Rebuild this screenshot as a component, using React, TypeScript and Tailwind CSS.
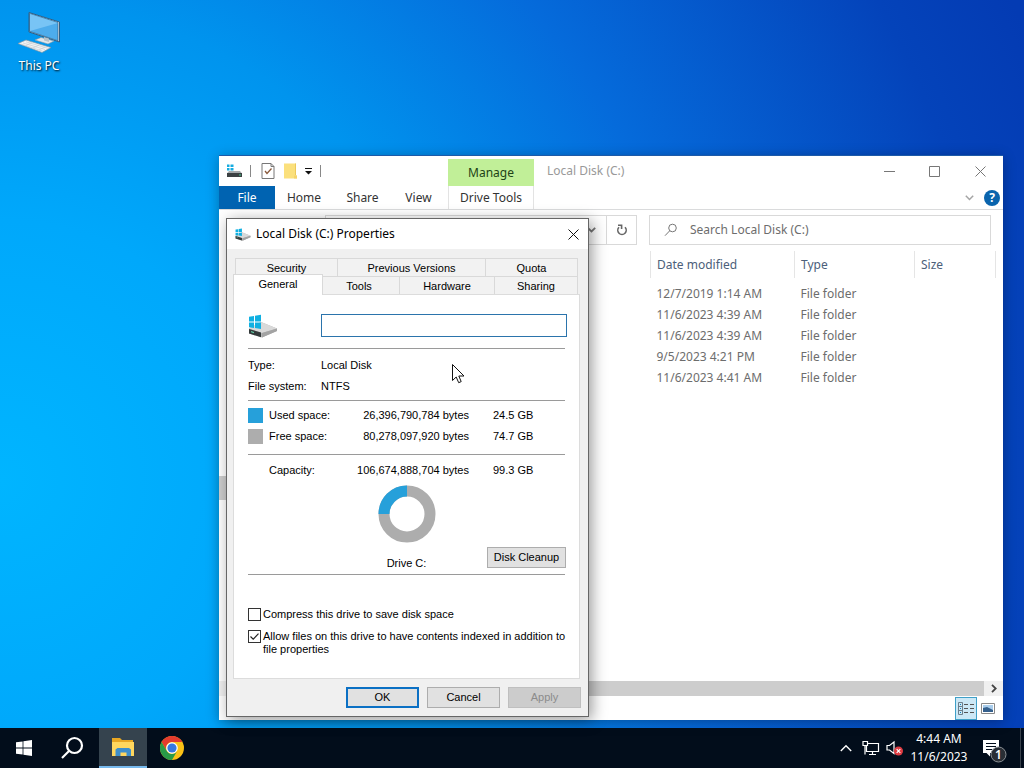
import { useState, type ReactNode } from 'react';

const folders = [
  { modified: '12/7/2019 1:14 AM', type: 'File folder' },
  { modified: '11/6/2023 4:39 AM', type: 'File folder' },
  { modified: '11/6/2023 4:39 AM', type: 'File folder' },
  { modified: '9/5/2023 4:21 PM', type: 'File folder' },
  { modified: '11/6/2023 4:41 AM', type: 'File folder' },
];

function WindowsLogo({ className }: { className?: string }) {
  return (
    <svg viewBox="0 0 16 16" className={className} fill="currentColor" aria-hidden="true">
      <path d="M0 2.3 6.6 1.4V7.6H0zM7.4 1.3 16 0V7.6H7.4zM0 8.4H6.6V14.6L0 13.7zM7.4 8.4H16V16L7.4 14.7z" />
    </svg>
  );
}

function DriveIcon({ className }: { className?: string }) {
  return (
    <svg viewBox="0 0 30 24" className={className} aria-hidden="true">
      <path d="M1 14.500 13 8 29 14.500V17L14 23.500 1 19.500z" fill="#b4b4b4" />
      <path d="M1 14.500 13 8 29 14.500 14 19z" fill="#d9d9d9" />
      <path d="M14 19 29 14.500V17L14 23.500z" fill="#a3a3a3" />
      <path d="M1 15 13 18.500V23.300L1 19.500z" fill="#33393a" />
      <path d="M3 17 6 18V19.200L3 18.200z" fill="#5fc7a2" />
      <path d="M1 2.800 6 2V7.500H1zM7 1.800 13 .700V7.500H7zM1 8.500H6V14L1 13.300zM7 8.500H13V15L7 14.100z" fill="#10b0e2" />
    </svg>
  );
}

function ThisPcIcon() {
  return (
    <svg viewBox="0 0 44 42" className="h-[42px] w-11" aria-hidden="true">
      <path d="M12 .500 42.500 10V30L12 20z" fill="#dce9f2" stroke="#2b5f88" strokeWidth="1" />
      <path d="M12.500 1.500 41 10.500V28.800L12.500 19.300z" fill="#4dacec" stroke="#204f74" strokeWidth=".6" />
      <path d="M13 2 41 11 13 19z" fill="#78c4f5" />
      <path d="M18 28 24 25.500 37 29 31 32z" fill="#e3e7ea" stroke="#8a9aa5" strokeWidth=".6" />
      <path d="M27 25 32 26.500V30L27 28.500z" fill="#b9c3ca" />
      <path d="M1 31.500 9 28 34 35.500 25 40.500z" fill="#f1f3f4" stroke="#8397a5" strokeWidth=".7" />
      <path d="M6 31 28 37.500M9 29.800 31 36.300M3.500 32 25.500 39M9 33.500 15 30.500M16 36 22 33M22 38 28 35" stroke="#c3cace" strokeWidth=".6" />
    </svg>
  );
}

function ExplorerWindow() {
  return (
    <section className="absolute top-[155px] right-[21px] bottom-2 left-[219px] flex flex-col border-t border-[#1d5aa8] bg-white text-[12px] shadow-[0_2px_12px_rgba(0,0,0,0.3)]" aria-label="Local Disk (C:)">
      <header className="flex h-[54px] shrink-0 border-b border-[#dadbdc]">
        <div className="flex w-[229px] shrink-0 flex-col">
          <div className="flex h-[30px] items-center">
            <svg viewBox="0 0 16 14" className="ml-[7px] h-3.5 w-4" aria-hidden="true">
              <path d="M1 .500H3.500V3H1zM4.500 .500H7.500V3H4.500zM1 4H3.500V6.500H1zM4.500 4H7.500V6.500H4.500z" fill="#16ace0" />
              <path d="M3 7H14L16 9.500H1z" fill="#a5a9ab" />
              <path d="M1 9H16V13H1z" fill="#3c4143" />
              <path d="M13 10.500H15V11.500H13z" fill="#49d08d" />
            </svg>
            <i className="ml-2 h-3 w-px bg-[#888]" />
            <button aria-label="Properties" className="ml-2.5">
              <svg viewBox="0 0 14 16" className="h-4 w-3.5" aria-hidden="true">
                <path d="M1 .500H10L13 3.500V15.500H1z" fill="#fff" stroke="#777" />
                <path d="M10 .500V3.500H13" fill="none" stroke="#777" />
                <path d="m4 8 2 2.500L10.500 5.500" fill="none" stroke="#8a5a3c" strokeWidth="1.300" />
              </svg>
            </button>
            <button aria-label="New folder" className="ml-2">
              <svg viewBox="0 0 14 16" className="h-4 w-3.5" aria-hidden="true">
                <path d="M1 .500H13V12L14 13V15.500H1z" fill="#fbe07c" />
                <path d="M12.500 12V.500" stroke="#ecc95a" />
                <path d="M11 15.500V12.500H14V15.500z" fill="#f4d36b" />
              </svg>
            </button>
            <button aria-label="Customize Quick Access Toolbar" className="ml-2">
              <svg viewBox="0 0 7 7" className="h-[7px] w-[7px]" aria-hidden="true">
                <path d="M0 0H7V1H0zM0 3H7L3.500 6.500z" fill="#111" />
              </svg>
            </button>
            <i className="ml-2 h-3 w-px bg-[#888]" />
          </div>
          <nav className="flex h-[23px] text-[#333]">
            <button className="w-14 bg-[#0063b1] text-white">File</button>
            <button className="w-[58px]">Home</button>
            <button className="w-[59px]">Share</button>
            <button className="w-[53px]">View</button>
          </nav>
        </div>
        <div className="flex w-[86px] shrink-0 flex-col pt-[3px]">
          <div className="flex h-[27px] items-center justify-center bg-[#c1ef98] text-[#1e4316]">Manage</div>
          <button className="h-[23px] border-x border-[#e3e3e3] text-[#333]">Drive Tools</button>
        </div>
        <div className="flex min-w-0 flex-1 flex-col">
          <div className="flex h-[30px] items-center pl-[13px] text-[#999]">
            <h1 className="flex-1">Local Disk (C:)</h1>
            <div className="flex">
              <button aria-label="Minimize" className="flex w-[46px] justify-center">
                <svg viewBox="0 0 11 11" className="h-[11px] w-[11px]" stroke="#777"><path d="M0 5.500H11" /></svg>
              </button>
              <button aria-label="Maximize" className="flex w-[45px] justify-center">
                <svg viewBox="0 0 11 11" className="h-[11px] w-[11px]" stroke="#777" fill="none"><path d="M.500 .500H10.500V10.500H.500z" /></svg>
              </button>
              <button aria-label="Close" className="flex w-[46px] justify-center">
                <svg viewBox="0 0 11 11" className="h-[11px] w-[11px]" stroke="#777"><path d="m.500 .500 10 10M10.500 .500l-10 10" /></svg>
              </button>
            </div>
          </div>
          <div className="flex h-[23px] items-center justify-end gap-2.5 pr-[3px]">
            <button aria-label="Expand the ribbon">
              <svg viewBox="0 0 9 6" className="h-1.5 w-[9px]" fill="none" stroke="#a4a4a4" strokeWidth="1.500"><path d="m.800 .800 3.700 3.700L8.200 .800" /></svg>
            </button>
            <button aria-label="Help" className="flex h-4 w-4 items-center justify-center rounded-full bg-[#0a64ad] text-[12px] font-bold text-white">?</button>
          </div>
        </div>
      </header>

      <div className="flex h-[41px] shrink-0 items-start gap-3 pt-[5px] pr-3 pl-[106px]">
        <div className="flex h-[30px] flex-[0_0_312px] border border-[#d9d9d9]">
          <button aria-label="Previous locations" className="ml-auto flex w-[30px] items-center justify-center border-r border-[#d9d9d9]">
            <svg viewBox="0 0 9 6" className="h-1.5 w-[9px]" fill="none" stroke="#777" strokeWidth="1.800"><path d="m.800 .800 3.700 3.700L8.200 .800" /></svg>
          </button>
          <button aria-label="Refresh" className="flex w-[29px] items-center justify-center">
            <svg viewBox="0 0 12 12" className="h-3 w-3" fill="none" stroke="#666" strokeWidth="1.600">
              <path d="M3 3.300A4.200 4.200 0 1 0 9 3.300" />
              <path d="M2 1.200H5.600V5" />
            </svg>
          </button>
        </div>
        <label className="flex h-[30px] min-w-0 flex-1 items-center gap-3 border border-[#d9d9d9] pl-3.5">
          <svg viewBox="0 0 14 14" className="h-3.5 w-3.5 shrink-0" fill="none" stroke="#777">
            <circle cx="8.500" cy="5" r="3.800" />
            <path d="M5.800 7.700 1 12.700" />
          </svg>
          <input aria-label="Search" placeholder="Search Local Disk (C:)" className="min-w-0 flex-1 outline-none placeholder:text-[#6d6d6d]" />
        </label>
      </div>

      <div className="flex min-h-0 flex-1 pr-[7px]">
        <aside className="flex w-[7px] shrink-0 items-center">
          <i className="mt-11 h-6 w-full bg-[#cdcdcd]" />
        </aside>
        <div className="min-w-0 flex-1">
          <table className="w-full table-fixed text-left text-[#6d6d6d]">
            <colgroup>
              <col />
              <col className="w-36" />
              <col className="w-[120px]" />
              <col className="w-[81px]" />
            </colgroup>
            <thead>
              <tr className="h-[27px] text-[#4c607a]">
                <th aria-label="Name" className="border-r border-[#e5e5e5]" />
                <th className="border-r border-[#e5e5e5] pl-1.5 font-normal">Date modified</th>
                <th className="border-r border-[#e5e5e5] pl-1.5 font-normal">Type</th>
                <th className="border-r border-[#e5e5e5] pl-1.5 font-normal">Size</th>
              </tr>
              <tr className="h-[5px]"><td colSpan={4} /></tr>
            </thead>
            <tbody>
              {folders.map((folder, i) => (
                <tr key={i} className="h-[21px]">
                  <td />
                  <td className="pl-1.5">{folder.modified}</td>
                  <td className="pl-1.5">{folder.type}</td>
                  <td />
                </tr>
              ))}
            </tbody>
          </table>
        </div>
      </div>

      <div className="flex h-[15px] shrink-0 bg-[#f0f0f0]">
        <i className="ml-[106px] flex-1 bg-[#cdcdcd]" />
        <button aria-label="Scroll right" className="flex w-[19px] items-center justify-center">
          <svg viewBox="0 0 6 9" className="h-[9px] w-1.5" fill="none" stroke="#444" strokeWidth="1.800"><path d="m1 .800 3.700 3.700L1 8.200" /></svg>
        </button>
      </div>
      <footer className="flex h-6 shrink-0 items-center justify-end pr-1">
        <button aria-label="Details view" className="flex h-[23px] w-[22px] items-center justify-center border border-[#3fa0c8] bg-[#cce8f6]">
          <svg viewBox="0 0 16 13" className="h-[13px] w-4" fill="none" stroke="#6c7f8c">
            <path d="M.500 .500H4.500V12.500H.500zM.500 4.500H4.500M.500 8.500H4.500" />
            <path d="M6 2.500H10M12 2.500H16M6 6.500H10M12 6.500H16M6 10.500H10M12 10.500H16" stroke="#555" />
            <path d="M2 2.500H3M2 6.500H3M2 10.500H3" stroke="#147eb8" />
          </svg>
        </button>
        <button aria-label="Large icons view" className="flex h-[23px] w-[22px] items-center justify-center">
          <svg viewBox="0 0 14 11" className="h-[11px] w-3.5">
            <path d="M.500 .500H13.500V10.500H.500z" fill="#fff" stroke="#888" />
            <path d="M2 2H12V9H2z" fill="#a9cdec" />
            <path d="M2 5 6 4 12 7V9H2z" fill="#35608d" />
          </svg>
        </button>
      </footer>
    </section>
  );
}

function Tab({ children, active, className }: { children: ReactNode; active?: boolean; className: string }) {
  return (
    <button
      role="tab"
      aria-selected={!!active}
      className={`border-[#d9d9d9] ${active ? 'relative -mt-0.5 -mb-px -ml-0.5 h-[21px] border-x border-t bg-white pb-0.5' : 'h-[18px] border-t border-r bg-[#f2f2f2] pt-px'} ${className}`}
    >
      {children}
    </button>
  );
}

function Check({ label, defaultChecked }: { label: string; defaultChecked?: boolean }) {
  const [checked, setChecked] = useState(!!defaultChecked);
  return (
    <label className="-mr-3 flex items-start gap-0.5 leading-[13px]">
      <span className="grid shrink-0">
        <input
          type="checkbox"
          checked={checked}
          onChange={(e) => setChecked(e.target.checked)}
          className="col-start-1 row-start-1 h-[13px] w-[13px] appearance-none border border-[#333] bg-white"
        />
        {checked && (
          <svg viewBox="0 0 13 13" className="pointer-events-none col-start-1 row-start-1 h-[13px] w-[13px]" fill="none" stroke="#222" strokeWidth="1.200">
            <path d="m2.500 6.500 2.700 2.700 5.300-5.500" />
          </svg>
        )}
      </span>
      <span>{label}</span>
    </label>
  );
}

function SpaceRow({ color, label, bytes, size }: { color?: string; label: string; bytes: string; size: string }) {
  return (
    <div className="flex h-[21px] items-center">
      <i className={`h-[15px] w-[15px] ${color ?? ''}`} />
      <dt className="ml-1.5 w-[72px]">{label}</dt>
      <dd className="w-32 text-right">{bytes}</dd>
      <dd className="ml-6">{size}</dd>
    </div>
  );
}

function PropertiesDialog() {
  return (
    <section
      role="dialog"
      aria-label="Local Disk (C:) Properties"
      className="absolute top-[218px] left-[226px] w-[363px] border border-[#666] bg-[#f0f0f0] pb-2 font-['Liberation_Sans',Arial,sans-serif] text-[11px] text-black shadow-[3px_3px_14px_rgba(0,0,0,0.4)]"
    >
      <header className="flex h-[30px] items-center bg-white pr-[9px] pl-2 font-['Noto_Sans','Open_Sans',sans-serif] text-[12px]">
        <DriveIcon className="h-[13px] w-4" />
        <h2 className="ml-[5px] flex-1">Local Disk (C:) Properties</h2>
        <button aria-label="Close">
          <svg viewBox="0 0 11 11" className="h-[11px] w-[11px]" stroke="#111"><path d="m.500 .500 10 10M10.500 .500l-10 10" /></svg>
        </button>
      </header>

      <div className="px-1.5 pt-[9px]">
        <div role="tablist" className="mr-1 ml-0.5">
          <div className="flex border-l border-[#d9d9d9]">
            <Tab className="w-[102px]">Security</Tab>
            <Tab className="w-[148px]">Previous Versions</Tab>
            <Tab className="flex-1">Quota</Tab>
          </div>
          <div className="flex">
            <Tab active className="w-[90px]">General</Tab>
            <Tab className="w-[77px] pr-1">Tools</Tab>
            <Tab className="w-[95px]">Hardware</Tab>
            <Tab className="flex-1">Sharing</Tab>
          </div>
        </div>

        <div role="tabpanel" className="mr-0.5 h-[385px] border border-[#dcdcdc] bg-white px-3.5 pt-[19px]">
          <div className="flex h-[34px] items-start justify-between">
            <DriveIcon className="h-6 w-[30px]" />
            <input aria-label="Volume label" className="-mr-0.5 h-[23px] w-[246px] border border-[#2b74ac] bg-white px-1 outline-none" />
          </div>
          <hr className="border-[#9a9a9a]" />
          <dl className="grid grid-cols-[73px_1fr] pt-1.5 pb-[3px] leading-[21px]">
            <dt>Type:</dt>
            <dd>Local Disk</dd>
            <dt>File system:</dt>
            <dd>NTFS</dd>
          </dl>
          <hr className="border-[#9a9a9a]" />
          <dl className="pt-1 pb-[7px]">
            <SpaceRow color="bg-[#26a0da]" label="Used space:" bytes="26,396,790,784 bytes" size="24.5 GB" />
            <SpaceRow color="bg-[#adadad]" label="Free space:" bytes="80,278,097,920 bytes" size="74.7 GB" />
          </dl>
          <hr className="border-[#9a9a9a]" />
          <dl className="pt-[5px]">
            <SpaceRow label="Capacity:" bytes="106,674,888,704 bytes" size="99.3 GB" />
          </dl>
          <div className="grid h-[93px] grid-cols-[1fr_79px_1fr] pt-1">
            <div />
            <figure className="flex flex-col items-center justify-between pb-[3px]">
              <svg viewBox="0 0 58 58" className="h-[58px] w-[58px]" fill="none" strokeWidth="11">
                <circle cx="29" cy="29" r="23" stroke="#adadad" />
                <path d="M6 29A23 23 0 0 1 29 6" stroke="#26a0da" />
              </svg>
              <figcaption>Drive C:</figcaption>
            </figure>
            <button className="-mr-px mb-1.5 h-[21px] w-[79px] self-end justify-self-end border border-[#adadad] bg-[#e1e1e1]">Disk Cleanup</button>
          </div>
          <hr className="border-[#9a9a9a]" />
          <div className="flex flex-col gap-[9px] pt-[33px]">
            <Check label="Compress this drive to save disk space" />
            <Check label="Allow files on this drive to have contents indexed in addition to file properties" defaultChecked />
          </div>
        </div>

        <div className="flex justify-end gap-2 pt-2 pr-px">
          <button className="h-[21px] w-[73px] border-2 border-[#0b70c4] bg-[#e1e1e1]">OK</button>
          <button className="h-[21px] w-[73px] border border-[#adadad] bg-[#e1e1e1]">Cancel</button>
          <button disabled className="h-[21px] w-[73px] border border-[#bfbfbf] bg-[#cccccc] text-[#8b8b8b]">Apply</button>
        </div>
      </div>
    </section>
  );
}

function Taskbar() {
  return (
    <footer className="flex h-10 shrink-0 bg-[#020d1b] text-white">
      <button aria-label="Start" className="flex w-12 items-center justify-center">
        <WindowsLogo className="h-4 w-4" />
      </button>
      <button aria-label="Search" className="flex w-[51px] items-center justify-center pr-1">
        <svg viewBox="0 0 24 24" className="h-6 w-6" fill="none" stroke="currentColor" strokeWidth="2.200">
          <circle cx="14.500" cy="9.500" r="7.500" />
          <path d="M9 15 2 22" />
        </svg>
      </button>
      <button aria-label="File Explorer" className="flex w-12 items-center justify-center border-b-2 border-[#76b9ed] bg-[#35434e]">
        <svg viewBox="0 0 24 20" className="h-5 w-6" aria-hidden="true">
          <path d="M1 1H9L11 3H22V8H1z" fill="#e8a723" />
          <path d="M1 5H23V19H1z" fill="#ffd75e" />
          <path d="M4.500 19V12.500L6.500 11H18L20 12.500V19H15.500V15.500H9.500V19z" fill="#3e8fcb" />
        </svg>
      </button>
      <button aria-label="Google Chrome" className="flex w-[50px] items-center justify-center">
        <svg viewBox="0 0 24 24" className="h-6 w-6" aria-hidden="true">
          <circle cx="12" cy="12" r="12" fill="#fbc116" />
          <path d="M1.600 6A12 12 0 0 1 22.400 6H12A6 6 0 0 0 6.800 15z" fill="#e33b2e" />
          <path d="M1.600 6A12 12 0 0 0 12 24L17.200 15A6 6 0 0 1 6.800 15z" fill="#299b47" />
          <circle cx="12" cy="12" r="5.800" fill="#fff" />
          <circle cx="12" cy="12" r="4.600" fill="#3778e0" />
        </svg>
      </button>

      <div className="ml-auto flex items-center">
        <button aria-label="Show hidden icons">
          <svg viewBox="0 0 12 8" className="h-2 w-3" fill="none" stroke="currentColor" strokeWidth="1.400"><path d="m.800 7 5.200-5.200L11.200 7" /></svg>
        </button>
        <svg viewBox="0 0 18 16" className="ml-2.5 h-4 w-[18px]" fill="none" stroke="currentColor" strokeWidth="1.200" aria-label="Network">
          <path d="M5.500 3.500H16.500V11.500H4.500V6M1 1.500H5.500V5.500H1zM3 5.500V14.500M10.500 11.500V14.500M7 14.500H14" />
        </svg>
        <svg viewBox="0 0 18 16" className="ml-1.5 h-4 w-[18px]" aria-label="Volume muted">
          <path d="M1 5.500H3.500L8 2V13.500L3.500 10H1z" fill="none" stroke="currentColor" strokeWidth="1.200" />
          <circle cx="12.500" cy="11" r="4.500" fill="#df3c43" />
          <path d="m10.700 9.200 3.600 3.600M14.300 9.200l-3.600 3.600" stroke="#fff" strokeWidth="1.200" />
        </svg>
        <div className="w-[70px] text-center text-[12px] leading-[18px]">
          <div>4:44 AM</div>
          <div>11/6/2023</div>
        </div>
        <button aria-label="1 new notification" className="mr-2.5 ml-2">
          <svg viewBox="0 0 28 26" className="mt-1 h-[26px] w-7">
            <path d="M1 3H17V16H8V19.500L4.500 16H1z" fill="#fff" />
            <path d="M4 6.500H14M4 9.500H14M4 12.500H10" stroke="#020d1b" strokeWidth="1.200" />
            <circle cx="16.500" cy="17.500" r="7.500" fill="#292e35" stroke="#8c9196" />
            <text x="16.500" y="22" textAnchor="middle" fontSize="12" fontWeight="600" fill="#fff">1</text>
          </svg>
        </button>
        <i className="h-10 w-1 border-l border-[#39424c]" />
      </div>
    </footer>
  );
}

export default function App() {
  return (
    <div className="flex h-screen flex-col overflow-hidden font-['Noto_Sans','Open_Sans',sans-serif] select-none">
      <main className="relative flex-1 bg-[radial-gradient(circle_at_0_480px,#00b5ff_0,#00a8fb_260px,#0094ee_480px,#056bdb_710px,#0443ba_1000px,#043bb3_1120px)]">
        <button className="mt-3 ml-[7px] flex w-16 flex-col items-center gap-0.5 text-[12px] leading-5 text-white [text-shadow:1px_1px_2px_#000]">
          <ThisPcIcon />
          This PC
        </button>
        <ExplorerWindow />
        <PropertiesDialog />
        {/* mouse pointer */}
        <svg viewBox="0 0 13 20" className="pointer-events-none absolute top-[364px] left-[452px] h-5 w-[13px]" aria-hidden="true">
          <path d="M.500 .500V16.500L4.200 13 6.700 18.700 9.200 17.600 6.800 12H12z" fill="#fff" stroke="#111" />
        </svg>
      </main>
      <Taskbar />
    </div>
  );
}
